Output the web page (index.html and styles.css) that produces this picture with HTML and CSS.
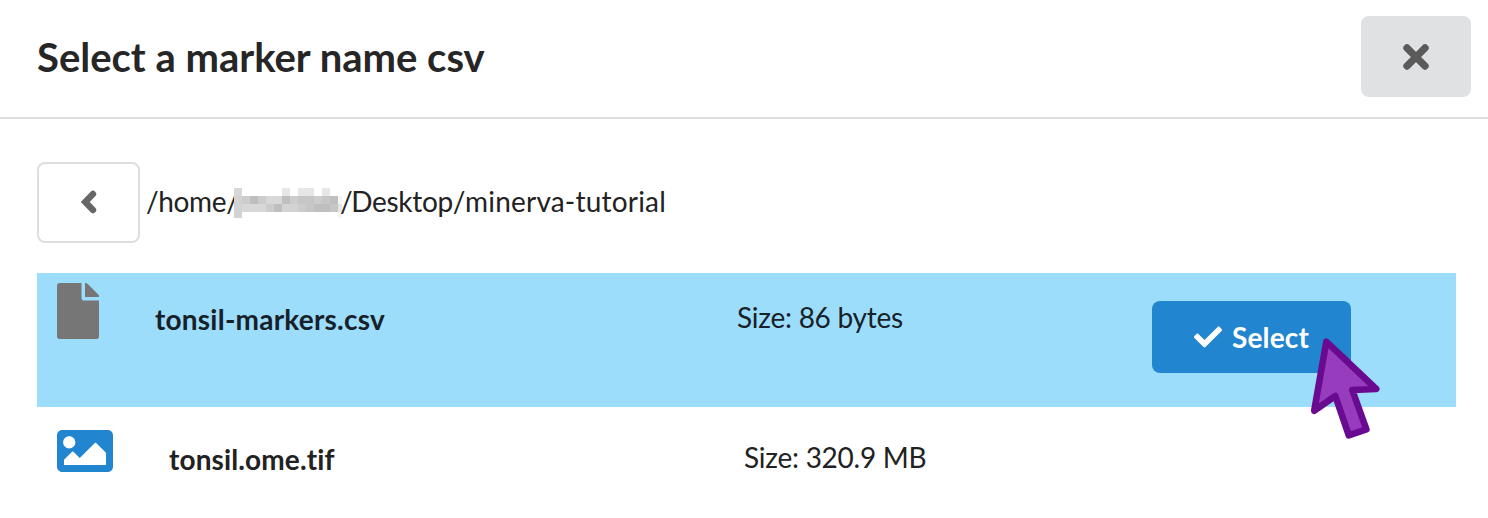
FILE: index.html
```html
<!DOCTYPE html>
<html lang="en">
<head>
<meta charset="utf-8">
<title>Select a marker name csv</title>
<link rel="stylesheet" href="styles.css">
</head>
<body>
<div class="modal">
  <header class="modal-header">
    <h1 class="title">Select a marker name csv</h1>
    <button class="close-button" aria-label="Close">
      <svg class="close-icon" viewBox="0 0 26 26"><path d="M4 4L22 22M22 4L4 22"/></svg>
    </button>
  </header>
  <main class="content">
    <div class="path-bar">
      <button class="back-button" aria-label="Back">
        <svg class="back-icon" viewBox="0 0 16 24"><path d="M12 4L4.2 12L12 20"/></svg>
      </button>
      <span class="path-start">/home/</span>
      <svg class="redacted" viewBox="0 0 108 30" shape-rendering="crispEdges">
        <path fill="#d8d8d8" d="M0 0h8v8H0zM32 8h16v8H32zM8 16h24v8H8z"/>
        <path fill="#e6e6e6" d="M48 0h8v8h-8zM64 0h16v8H64zM88 0h8v8h-8zM104 16h4v8h-4z"/>
        <path fill="#d3d3d3" d="M0 8h8v22H0zM48 16h16v8H48z"/>
        <path fill="#cccccc" d="M8 8h8v8H8zM24 8h8v8h-8zM56 8h8v8h-8zM80 8h8v8h-8zM32 16h8v8h-8zM64 16h8v8h-8z"/>
        <path fill="#c6c6c6" d="M64 8h16v8H64zM88 8h8v8h-8zM72 16h8v8h-8zM96 16h8v8h-8z"/>
        <path fill="#bfbfbf" d="M16 8h8v8h-8zM48 8h8v8h-8zM96 8h8v8h-8zM40 16h8v8h-8zM80 16h16v8H80z"/>
        <path fill="#f5f5f5" d="M104 8h4v8h-4zM104 24h4v6h-4z"/>
      </svg>
      <span class="path-end"><span class="slash">/</span><span class="folder">Desktop/</span><span class="subfolder">minerva-tutorial</span></span>
    </div>
    <div class="file-row selected">
      <svg class="file-icon document" viewBox="0 0 384 512"><path d="M224 136V0H24C10.7 0 0 10.7 0 24v464c0 13.3 10.7 24 24 24h336c13.3 0 24-10.7 24-24V160H248c-13.2 0-24-10.8-24-24zm160-14.1v6.1H256V0h6.1c6.4 0 12.5 2.5 17 7l97.9 98c4.5 4.5 7 10.6 7 16.9z"/></svg>
      <span class="file-name">tonsil-markers.csv</span>
      <span class="file-size">Size: 86 bytes</span>
      <div class="action">
        <button class="select-button">
          <svg class="check-icon" viewBox="0 0 512 512"><path d="M173.898 439.404l-166.4-166.4c-9.997-9.997-9.997-26.206 0-36.204l36.203-36.204c9.997-9.998 26.207-9.998 36.204 0L192 312.69 432.095 72.596c9.997-9.997 26.207-9.997 36.204 0l36.203 36.204c9.997 9.997 9.997 26.206 0 36.204l-294.4 294.401c-9.998 9.997-26.207 9.997-36.204-.001z"/></svg>
          <span>Select</span>
        </button>
        <svg class="pointer" viewBox="0 0 72 104"><path d="M16.3 5.7L66.2 53 42.3 54 56.4 93.4 38.8 99.4 25.3 60 4.2 74.7z"/></svg>
      </div>
    </div>
    <div class="file-row">
      <svg class="file-icon picture" viewBox="0 0 512 512"><path d="M464 448H48c-26.51 0-48-21.49-48-48V112c0-26.51 21.49-48 48-48h416c26.51 0 48 21.49 48 48v288c0 26.51-21.49 48-48 48zM112 120c-30.928 0-56 25.072-56 56s25.072 56 56 56 56-25.072 56-56-25.072-56-56-56zM64 384h384V272l-87.515-87.515c-4.686-4.686-12.284-4.686-16.971 0L208 320l-55.515-55.515c-4.686-4.686-12.284-4.686-16.971 0L64 336v48z"/></svg>
      <span class="file-name">tonsil.ome.tif</span>
      <span class="file-size">Size: 320.9 MB</span>
    </div>
  </main>
</div>
</body>
</html>
```

FILE: styles.css
```css
* {
  box-sizing: border-box;
}

body {
  margin: 0;
  background: #fff;
  color: #222;
  font-family: Lato, "Liberation Sans", sans-serif;
  font-size: 28px;
  line-height: 40px;
  font-variant-ligatures: none;
  overflow: hidden;
}

button {
  margin: 0;
  padding: 0;
  border: 0;
  font: inherit;
}

svg {
  display: block;
  flex: none;
}

.modal {
  height: 518px;
}

.modal-header {
  display: flex;
  justify-content: space-between;
  align-items: flex-start;
  height: 119px;
  padding: 16px 17px 0 37px;
  border-bottom: 2px solid #dedede;
}

.title {
  margin: 16px 0 0;
  font-size: 40px;
  line-height: 51px;
  font-weight: 700;
  color: #262626;
}

.close-button {
  display: flex;
  justify-content: center;
  width: 110px;
  height: 81px;
  padding-top: 28px;
  border-radius: 8px;
  background: #e0e1e2;
}

.close-icon {
  width: 26px;
  height: 26px;
  fill: none;
  stroke: #5a5a5a;
  stroke-width: 7.4;
  stroke-linecap: round;
}

.content {
  padding: 42px 32px 0 37px;
}

.path-bar {
  display: flex;
  align-items: center;
  height: 82px;
  margin-bottom: 30px;
  white-space: nowrap;
}

.back-button {
  display: flex;
  align-items: center;
  justify-content: center;
  width: 103px;
  height: 81px;
  margin-right: 6px;
  border: 2px solid #dedede;
  border-radius: 8px;
  background: #fff;
}

.back-icon {
  width: 16px;
  height: 24px;
  fill: none;
  stroke: #666;
  stroke-width: 6.4;
  stroke-linecap: round;
}

.path-start {
  width: 88px;
  margin-top: -2px;
  letter-spacing: -0.35px;
}

.redacted {
  width: 108px;
  height: 30px;
  margin-top: 2px;
}

.path-end {
  margin-top: -2px;
  margin-left: -2px;
}

.slash {
  letter-spacing: -1.4px;
}

.folder {
  letter-spacing: -0.3px;
}

.subfolder {
  letter-spacing: 0.2px;
}

.file-row {
  display: grid;
  grid-template-columns: 98px 582px 415px 199px;
  align-items: start;
  height: 134px;
  padding: 0 20px;
}

.selected {
  background: #9dddfc;
  color: #16212a;
}

.file-icon {
  height: 56px;
  margin-top: 10px;
}

.document {
  width: 42px;
  fill: #767676;
}

.picture {
  width: 56px;
  margin-top: 16px;
  fill: #2185d0;
}

.file-name {
  margin-top: 26px;
  font-weight: 700;
  letter-spacing: 0.22px;
}

.file-size {
  margin-top: 24px;
  letter-spacing: -0.25px;
}

.file-row:not(.selected) {
  grid-template-columns: 112px 575px 1fr;
  height: 111px;
}

.file-row:not(.selected) .file-name {
  margin-top: 32px;
  letter-spacing: 0.12px;
}

.file-row:not(.selected) .file-size {
  margin-top: 30px;
}

.action {
  position: relative;
  margin-top: 28px;
}

.select-button {
  display: flex;
  align-items: center;
  gap: 10px;
  width: 199px;
  height: 72px;
  padding-left: 42px;
  border-radius: 8px;
  background: #2185d0;
  color: #fff;
  font-weight: 700;
  letter-spacing: 0.15px;
}

.check-icon {
  width: 28px;
  height: 28px;
  fill: #fff;
}

.pointer {
  position: absolute;
  left: 158px;
  top: 35px;
  width: 72px;
  height: 104px;
  fill: #963cbd;
  stroke: #6a0a91;
  stroke-width: 6.6;
  stroke-linejoin: round;
}
```
